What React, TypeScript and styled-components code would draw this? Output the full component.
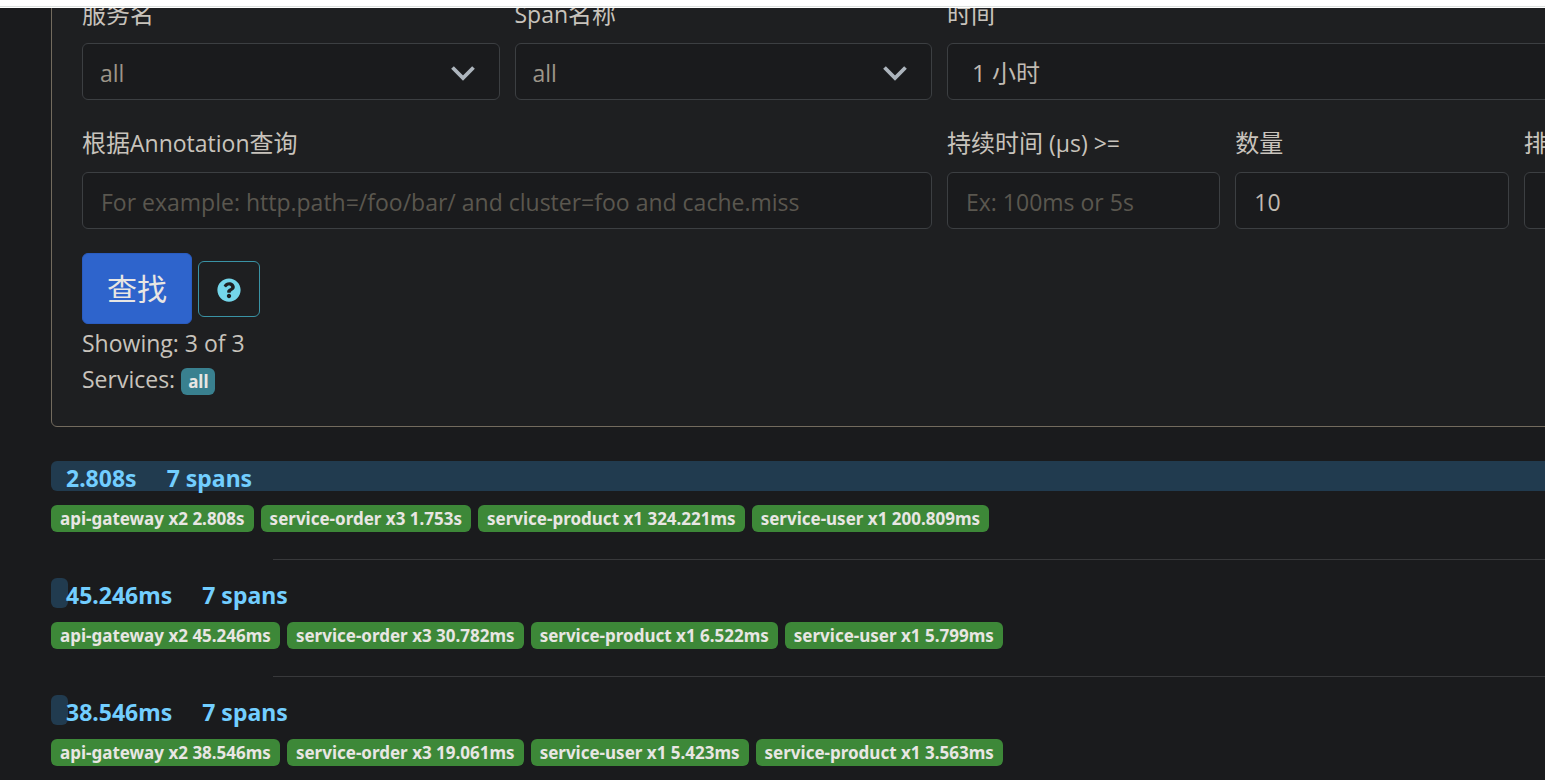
import React from "react";
import styled, { createGlobalStyle } from "styled-components";
import { FaQuestionCircle } from "react-icons/fa";

const GlobalStyle = createGlobalStyle`
  *, *::before, *::after { box-sizing: border-box; }
  html, body { margin: 0; background: #1a1b1d; }
  body, button, input, select {
    font-family: "Open Sans", "Noto Sans CJK SC", sans-serif;
  }
  body { color: #c8c3bc; font-size: 23px; line-height: 36px; }
`;

const Page = styled.div`
  min-height: 100vh;
  overflow: hidden;
`;

const TopBar = styled.header`
  height: 8px;
  border-bottom: 1px solid #fff;
  background: #fff;
  box-shadow: inset 0 -1px 0 #dee2e0;
`;

const Scroller = styled.main`
  height: calc(100vh - 8px);
  overflow: hidden;
  padding-left: 51px;
`;

/* The sheet is wider than the window and runs off its right edge. */
const Sheet = styled.div`
  margin-top: -42px;
  margin-right: -283px;
`;

const Panel = styled.form`
  padding: 30px 15px 29px 30px;
  border: 1px solid #736b5e;
  border-radius: 6px;
  background: #1e1f21;
`;

const Row = styled.div`
  display: grid;
  grid-template-columns: repeat(12, 1fr);
  margin-bottom: 26px;
`;

const Field = styled.div<{ $span: number }>`
  grid-column: span ${(p) => p.$span};
  min-width: 0;
  padding-right: 15px;
`;

const Label = styled.label`
  display: block;
  height: 36px;
  margin-bottom: 10px;
  font-size: 24px;
  line-height: 34px;
  white-space: nowrap;
`;

const Latin = styled.span`
  font-size: 23px;
`;

const control = `
  display: block;
  width: 100%;
  height: 57px;
  margin: 0;
  border: 1px solid #3c3f42;
  border-radius: 6px;
  background: #1a1b1d;
  outline: none;
  appearance: none;
`;

const Input = styled.input`
  ${control}
  padding: 2px 18px 0;
  color: #c0bab2;
  font-size: 23px;
  &::placeholder { color: #5a574f; opacity: 1; }
`;

const SelectBox = styled.div`
  position: relative;
`;

const Select = styled.select<{ $strong?: boolean }>`
  ${control}
  padding: 2px ${(p) => (p.$strong ? 24 : 17)}px 0;
  color: ${(p) => (p.$strong ? "#c0bab2" : "#9c9589")};
  font-size: ${(p) => (p.$strong ? 24 : 23)}px;
`;

const Arrow = styled.svg`
  position: absolute;
  top: 23px;
  right: 25px;
  pointer-events: none;
`;

const Actions = styled.div`
  display: flex;
  align-items: center;
  gap: 6px;
  margin: -2px 0 1px;
`;

const FindButton = styled.button`
  width: 110px;
  height: 71px;
  padding: 0 0 4px;
  border: 1px solid #2a5cc0;
  border-radius: 6px;
  background: #2e64cc;
  color: #e8e6e3;
  font-size: 30px;
`;

const HelpButton = styled.button`
  display: flex;
  align-items: center;
  justify-content: center;
  width: 62px;
  height: 56px;
  padding: 2px 0 0;
  border: 1px solid #3a93a5;
  border-radius: 6px;
  background: transparent;
  color: #74d6ea;
  font-size: 24px;
`;

const Summary = styled.div`
  height: 36px;
`;

const Badge = styled.span<{ $info?: boolean }>`
  display: inline-block;
  height: 27px;
  padding: 0 ${(p) => (p.$info ? 7 : 9)}px;
  border-radius: 6px;
  background: ${(p) => (p.$info ? "#39808f" : "#3d8838")};
  color: #e8e6e3;
  font-family: "Noto Sans", sans-serif;
  font-size: 17px;
  font-weight: 700;
  line-height: 28px;
  white-space: nowrap;
`;

const Traces = styled.section`
  margin-top: 34px;
`;

const Trace = styled.div`
  position: relative;
`;

const Bar = styled.div`
  position: absolute;
  top: 0;
  left: 0;
  min-width: 17px;
  height: 30px;
  border-radius: 6px;
  background: #213b4f;
`;

const TraceHead = styled.div`
  position: relative;
  display: flex;
  gap: 30px;
  height: 30px;
  margin-bottom: 14px;
  padding-left: 15px;
  color: #72ceff;
  font-family: "Noto Sans", sans-serif;
  font-size: 23px;
  font-weight: 700;
  line-height: 34px;
`;

const Badges = styled.div`
  display: flex;
  gap: 7px;
`;

const Divider = styled.hr`
  width: 75%;
  height: 1px;
  margin: 27px auto 18px;
  border: 0;
  background: #38393b;
`;

const Chevron = () => (
  <Arrow width="24" height="16" viewBox="0 0 24 16" fill="none" aria-hidden="true">
    <path d="M1.5 1.5 12 12 22.5 1.5" stroke="#adb5bd" strokeWidth="3.8" />
  </Arrow>
);

const traces = [
  {
    duration: "2.808s",
    ratio: 100,
    services: [
      "api-gateway x2 2.808s",
      "service-order x3 1.753s",
      "service-product x1 324.221ms",
      "service-user x1 200.809ms",
    ],
  },
  {
    duration: "45.246ms",
    ratio: 0,
    services: [
      "api-gateway x2 45.246ms",
      "service-order x3 30.782ms",
      "service-product x1 6.522ms",
      "service-user x1 5.799ms",
    ],
  },
  {
    duration: "38.546ms",
    ratio: 0,
    services: [
      "api-gateway x2 38.546ms",
      "service-order x3 19.061ms",
      "service-user x1 5.423ms",
      "service-product x1 3.563ms",
    ],
  },
];

export default function App() {
  return (
    <Page>
      <GlobalStyle />
      <TopBar />
      <Scroller>
        <Sheet>
          <Panel onSubmit={(e) => e.preventDefault()}>
            <Row>
              <Field $span={3}>
                <Label htmlFor="service">服务名</Label>
                <SelectBox>
                  <Select id="service">
                    <option>all</option>
                  </Select>
                  <Chevron />
                </SelectBox>
              </Field>
              <Field $span={3}>
                <Label htmlFor="span">
                  <Latin>Span</Latin>名称
                </Label>
                <SelectBox>
                  <Select id="span">
                    <option>all</option>
                  </Select>
                  <Chevron />
                </SelectBox>
              </Field>
              <Field $span={6}>
                <Label htmlFor="lookback">时间</Label>
                <Select id="lookback" $strong>
                  <option>1 小时</option>
                </Select>
              </Field>
            </Row>
            <Row>
              <Field $span={6}>
                <Label htmlFor="annotation">
                  根据<Latin>Annotation</Latin>查询
                </Label>
                <Input
                  id="annotation"
                  placeholder="For example: http.path=/foo/bar/ and cluster=foo and cache.miss"
                />
              </Field>
              <Field $span={2}>
                <Label htmlFor="duration">
                  持续时间<Latin> (μs) &gt;=</Latin>
                </Label>
                <Input id="duration" placeholder="Ex: 100ms or 5s" />
              </Field>
              <Field $span={2}>
                <Label htmlFor="limit">数量</Label>
                <Input id="limit" defaultValue="10" />
              </Field>
              <Field $span={2}>
                <Label htmlFor="sort">排序</Label>
                <Select id="sort" $strong>
                  <option>耗时降序</option>
                </Select>
              </Field>
            </Row>
            <Actions>
              <FindButton type="submit">查找</FindButton>
              <HelpButton type="button" aria-label="Help">
                <FaQuestionCircle />
              </HelpButton>
            </Actions>
            <Summary>Showing: 3 of 3</Summary>
            <Summary>
              Services: <Badge $info>all</Badge>
            </Summary>
          </Panel>
          <Traces>
            {traces.map((t, i) => (
              <React.Fragment key={t.duration}>
                {i > 0 && <Divider />}
                <Trace>
                  <Bar style={{ width: `${t.ratio}%` }} />
                  <TraceHead>
                    <span>{t.duration}</span>
                    <span>7 spans</span>
                  </TraceHead>
                  <Badges>
                    {t.services.map((s) => (
                      <Badge key={s}>{s}</Badge>
                    ))}
                  </Badges>
                </Trace>
              </React.Fragment>
            ))}
          </Traces>
        </Sheet>
      </Scroller>
    </Page>
  );
}
